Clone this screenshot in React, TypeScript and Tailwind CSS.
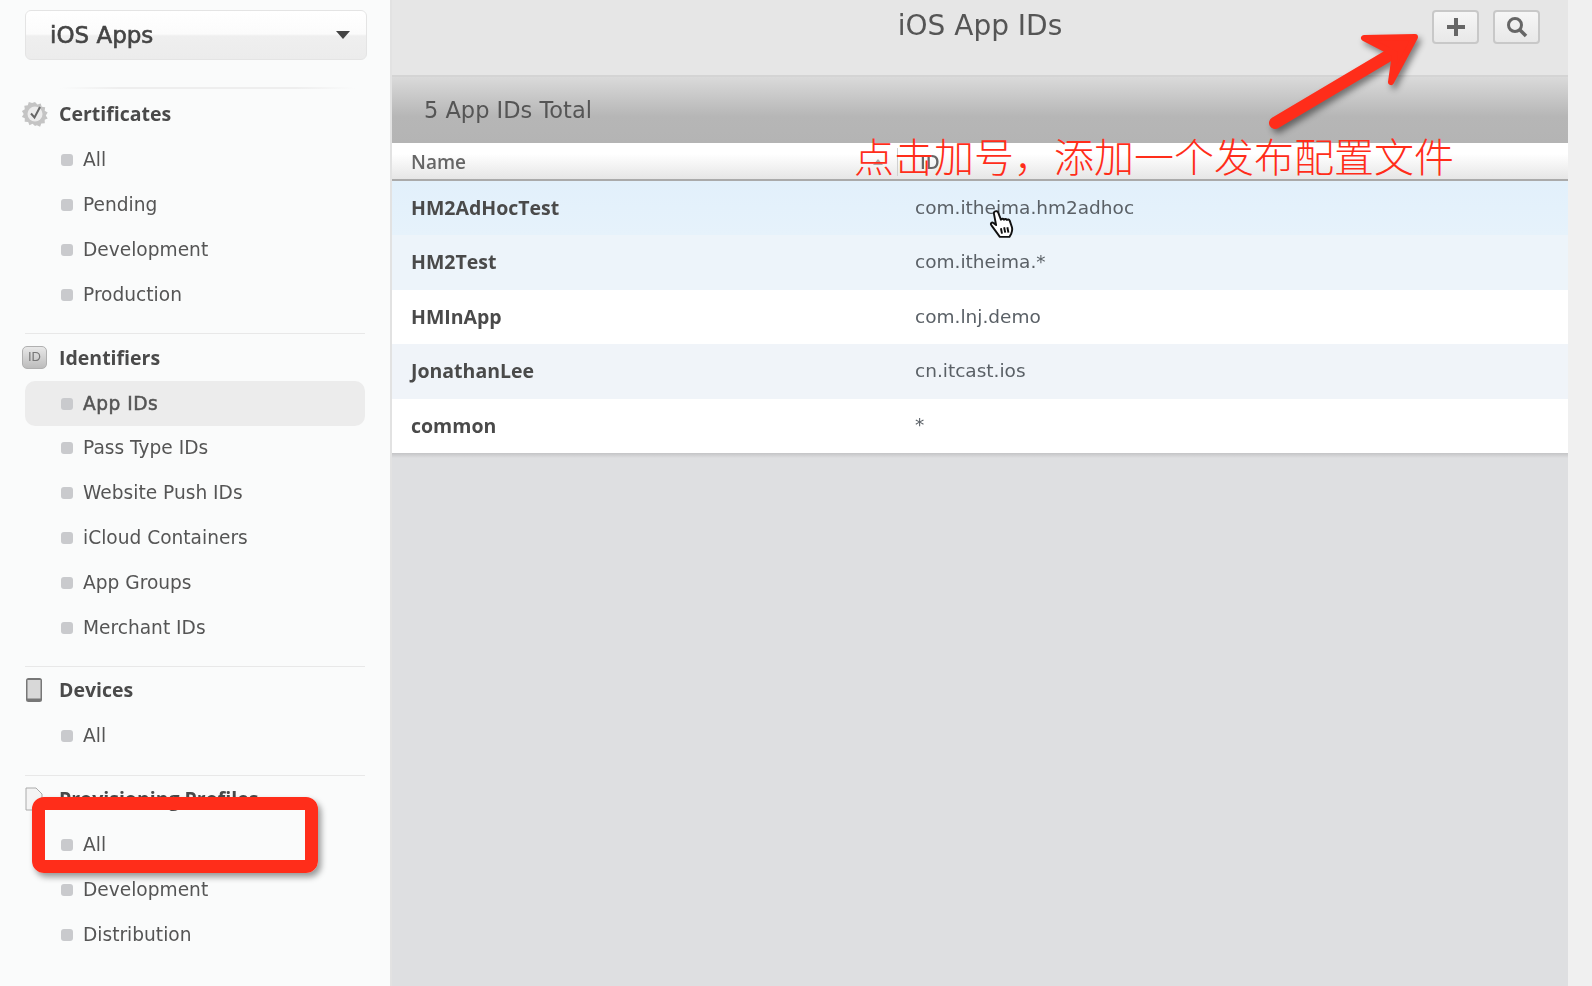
const sections = [
  { title: "Certificates", icon: "gear", items: ["All", "Pending", "Development", "Production"] },
  { title: "Identifiers", icon: "id", items: ["App IDs", "Pass Type IDs", "Website Push IDs", "iCloud Containers", "App Groups", "Merchant IDs"] },
  { title: "Devices", icon: "device", items: ["All"] },
  { title: "Provisioning Profiles", icon: "doc", items: ["All", "Development", "Distribution"] },
]

const rows = [
  { name: "HM2AdHocTest", id: "com.itheima.hm2adhoc", bg: "bg-[linear-gradient(#e2f0fb,#e6f2fb)]" },
  { name: "HM2Test", id: "com.itheima.*", bg: "bg-[#edf4fa]" },
  { name: "HMInApp", id: "com.lnj.demo", bg: "bg-white" },
  { name: "JonathanLee", id: "cn.itcast.ios", bg: "bg-[#f0f4f9]" },
  { name: "common", id: "*", bg: "bg-white" },
]

function SectionIcon({ kind }: { kind: string }) {
  if (kind === "gear") {
    return (
      <svg width="26" height="26" viewBox="0 0 26 26">
        <path d="M13 1l2.400 2.600 3.300-1.200 1 3.400 3.500.4-.5 3.500 3 1.800-1.900 3 1.900 3-3 1.200.1 3.600-3.500.1-1.200 3.300-3.200-1.500L13 25l-2.400-2.300-3.200 1.500-1.200-3.300-3.500-.1.1-3.600-3-1.200 1.900-3-1.900-3 3-1.800-.5-3.500 3.500-.4 1-3.400 3.300 1.200z" fill="#c4c4c4" />
        <circle cx="13" cy="13" r="7.500" fill="#ececec" />
        <path d="M9 12.500l3.500 4L18 6" fill="none" stroke="#666" strokeWidth="2" />
      </svg>
    )
  }
  if (kind === "id") {
    return (
      <div className="flex h-[23px] w-[25px] items-center justify-center rounded-[5px] border border-[#b0b0b0] bg-[linear-gradient(#e8e8e8,#bcbcbc)] font-['Liberation_Sans',sans-serif] text-[13px] text-[#777]">
        ID
      </div>
    )
  }
  if (kind === "device") {
    return (
      <svg className="ml-[3px]" width="18" height="26" viewBox="0 0 18 26">
        <rect x="1" y="1" width="16" height="24" rx="2.500" fill="#777" />
        <rect x="2.500" y="3" width="13" height="18.500" fill="#d8d8d8" />
      </svg>
    )
  }
  return (
    <svg className="ml-[3px]" width="18" height="24" viewBox="0 0 18 24">
      <path d="M1 1h10l6 6v16H1z" fill="#f4f4f4" stroke="#aaa" />
    </svg>
  )
}

function Sidebar() {
  return (
    <aside className="w-[392px] shrink-0 border-r-2 border-[#e2e2e2] bg-[#fafbfb] px-[25px] pt-[10px]">
      <div className="flex h-[50px] w-[342px] items-center justify-between rounded-[6px] border border-[#e4e4e4] bg-[linear-gradient(#ffffff_0%,#fbfbfb_48%,#efefef_52%,#ececec_100%)] pl-[24px] pr-[16px] blur-[0.4px]">
        <span className="font-['DejaVu_Sans',sans-serif] text-[23px] text-[#444] [-webkit-text-stroke:0.6px_#444]">iOS Apps</span>
        <span className="h-0 w-0 border-x-[7px] border-t-[8px] border-x-transparent border-t-[#444]" />
      </div>
      <div className="ml-[35px] mt-[27px] h-[2px] w-[295px] bg-[linear-gradient(90deg,#fafbfb,#eeeeee_20%,#eeeeee_80%,#fafbfb)]" />
      {sections.map((section, i) => (
        <div key={section.title} className={i > 0 ? "mt-[16px] border-t border-[#e8e8e8] pt-px" : "mt-[3px]"}>
          <div className="flex h-[46px] items-center pb-[2px] blur-[0.4px]">
            <div className="-ml-[3px] flex w-[37px] shrink-0 items-center">
              <SectionIcon kind={section.icon} />
            </div>
            <span className="font-['Open_Sans',sans-serif] text-[19.500px] font-bold text-[#4a4a4a]">{section.title}</span>
          </div>
          {section.items.map((item) => {
            const active = item === "App IDs"
            return (
              <div
                key={item}
                className={`flex h-[44.800px] items-center rounded-[10px] pl-[36px] blur-[0.4px] ${active ? "bg-[#ececec]" : ""}`}
              >
                <span className="mr-[10px] h-[12px] w-[12px] rounded-[3px] bg-[#c9cacd]" />
                <span className={`font-['DejaVu_Sans',sans-serif] text-[18.600px] text-[#555] ${active ? "tracking-[0.5px] [-webkit-text-stroke:0.5px_#555]" : ""}`}>{item}</span>
              </div>
            )
          })}
        </div>
      ))}
    </aside>
  )
}

function Main() {
  return (
    <main className="flex w-[1176px] shrink-0 flex-col bg-[#dedfe1]">
      <div className="relative flex h-[77px] justify-center border-b-2 border-[#d4d4d4] bg-[#e6e6e6] pt-[5px]">
        <span className="font-['DejaVu_Sans',sans-serif] text-[28px] text-[#555] blur-[0.4px]">iOS App IDs</span>
        <div className="absolute right-[28px] top-[10px] flex gap-[14px]">
          <button className="flex h-[34px] w-[47px] items-center justify-center rounded-[4px] border-2 border-[#c8c8c8] bg-[linear-gradient(#f6f6f6,#e8e8e8)] blur-[0.3px]">
            <svg width="20" height="20" viewBox="0 0 20 20">
              <path d="M10 1v18M1 10h18" stroke="#666" strokeWidth="4" />
            </svg>
          </button>
          <button className="flex h-[34px] w-[47px] items-center justify-center rounded-[4px] border-2 border-[#c8c8c8] bg-[linear-gradient(#f6f6f6,#e8e8e8)] blur-[0.3px]">
            <svg width="22" height="22" viewBox="0 0 22 22">
              <circle cx="9" cy="9" r="6.500" fill="none" stroke="#666" strokeWidth="3" />
              <path d="M14 14l6 6" stroke="#666" strokeWidth="3.500" />
            </svg>
          </button>
        </div>
      </div>
      <div className="flex h-[66px] items-center bg-[linear-gradient(#dadada,#b6b6b6_60%,#b4b4b4)] pl-[32px] pt-[2px]">
        <span className="font-['DejaVu_Sans',sans-serif] text-[22.500px] text-[#555] blur-[0.4px]">5 App IDs Total</span>
      </div>
      <div className="flex h-[38px] items-center border-b-2 border-[#aaaaaa] bg-[linear-gradient(#ffffff,#ffffff_30%,#e6e6e6)] pl-[19px] pt-[2px] blur-[0.3px]">
        <span className="w-[462px] font-['Open_Sans',sans-serif] text-[19px] font-semibold text-[#666]">Name</span>
        <span className="h-0 w-0 border-x-[5px] border-b-[6px] border-x-transparent border-b-[#aaa]" />
        <span className="ml-[14px] mr-[22px] h-[28px] w-px bg-[#d0d0d0]" />
        <span className="font-['Open_Sans',sans-serif] text-[19px] font-semibold text-[#666]">ID</span>
      </div>
      {rows.map((row) => (
        <div key={row.name} className={`flex h-[54.400px] items-center pb-[1px] pl-[19px] ${row.bg}`}>
          <span className="w-[504px] font-['Open_Sans',sans-serif] text-[19.500px] font-bold text-[#4a4a4a] blur-[0.3px]">{row.name}</span>
          <span className="font-['DejaVu_Sans',sans-serif] text-[18.500px] text-[#5a6066] blur-[0.3px]">{row.id}</span>
        </div>
      ))}
      <div className="h-[5px] bg-[linear-gradient(#c4c4c6,#dedfe1)]" />
    </main>
  )
}

export default function App() {
  return (
    <div className="relative flex h-[986px] w-[1592px] overflow-hidden bg-[#f0f0f0]">
      <Sidebar />
      <Main />

      {/* annotations drawn over the recording */}
      <div className="absolute left-[32px] top-[797px] h-[76px] w-[286px] rounded-[12px] border-[13px] border-[#ff2d1a] shadow-[3px_4px_6px_rgba(0,0,0,0.4)]" />
      <svg className="absolute left-[1260px] top-[25px] drop-shadow-[3px_4px_3px_rgba(0,0,0,0.45)]" width="170" height="110" viewBox="1260 25 170 110">
        <path d="M1275 123L1398 50" fill="none" stroke="#ff2d1a" strokeWidth="12" strokeLinecap="round" />
        <path d="M1364 38L1415 37L1391 82L1395 54z" fill="#ff2d1a" stroke="#ff2d1a" strokeWidth="6" strokeLinejoin="round" />
      </svg>
      <div className="absolute left-[854px] top-[127px] whitespace-nowrap font-['Noto_Sans_CJK_SC',sans-serif] text-[40px] font-light leading-[56px] text-[#ff2d1a]">
        点击加号，添加一个发布配置文件
      </div>
      <svg className="absolute left-[988px] top-[209px] blur-[0.3px]" width="28" height="30" viewBox="0 0 26 28">
        <path d="M6 2.500c1.500-1 3-.5 3.500 1L12 10c.5-1 2-1.200 2.800 0 .5-.8 2-1 2.800.2.600-.6 2-.6 2.600.6l2 6c.6 2 .3 4-.5 6L20 26h-9L3 15c-1-1.500.5-3 2-2l2.500 2L5.500 4.500c-.2-1 0-1.600.5-2z" fill="#fff" stroke="#111" strokeWidth="1.800" strokeLinejoin="round" />
        <path d="M12 18l1 5M15 17l1 5M18 17l1 5" stroke="#111" strokeWidth="1.800" />
      </svg>
    </div>
  )
}
